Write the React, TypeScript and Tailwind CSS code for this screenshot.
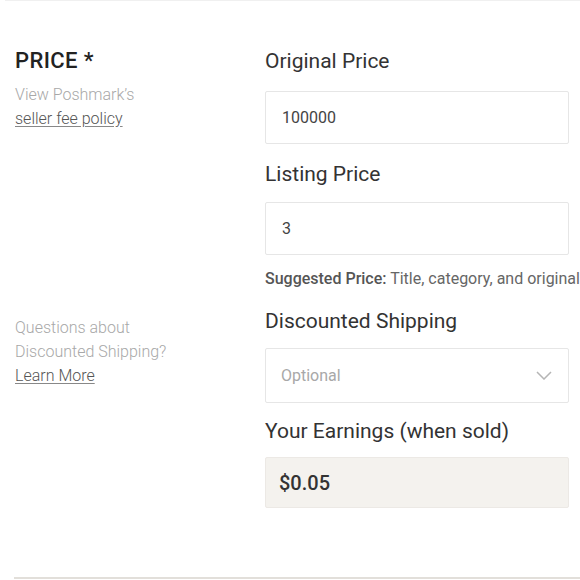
import React from "react";

const font = { fontFamily: "Roboto, 'Noto Sans', sans-serif" };

export default function App() {
  return (
    <div className="w-[580px] h-[580px] bg-white relative overflow-hidden" style={font}>
      <div className="ml-[5px] h-[1px] bg-[#f0f0f0]" />
      <div className="flex flex-col pt-[46px]">
        <div className="flex">
          <div className="w-[265px] pl-[15px] shrink-0">
            <div className="text-[22px] leading-[28px] font-medium text-[#222] tracking-[0.4px]">PRICE *</div>
            <div className="mt-[8px] text-[16px] leading-[24px] font-light text-[#a8a8a8]">View Poshmark’s</div>
            <div className="text-[16px] leading-[24px] font-light text-[#555] underline underline-offset-2 decoration-[#888]">seller fee policy</div>
          </div>
          <div className="flex flex-col w-[304px]">
            <div className="text-[21px] leading-[28px] text-[#333]">Original Price</div>
            <div className="mt-[16px] h-[53px] border border-[#e6e6e6] rounded-[2px] flex items-center pl-[16px] text-[16px] text-[#444]">100000</div>
            <div className="mt-[16px] text-[21px] leading-[28px] text-[#333]">Listing Price</div>
            <div className="mt-[14px] h-[53px] border border-[#e6e6e6] rounded-[2px] flex items-center pl-[16px] text-[16px] text-[#444]">3</div>
            <div className="mt-[14px] text-[16px] leading-[20px] text-[#666] whitespace-nowrap">
              <span className="font-medium text-[#555]">Suggested Price:</span> Title, category, and original price required
            </div>
          </div>
        </div>
        <div className="flex mt-[18px]">
          <div className="w-[265px] pl-[15px] shrink-0 pt-[9px]">
            <div className="text-[16px] leading-[24px] font-light text-[#a8a8a8]">Questions about</div>
            <div className="text-[16px] leading-[24px] font-light text-[#a8a8a8]">Discounted Shipping?</div>
            <div className="text-[16px] leading-[24px] font-light text-[#555] underline underline-offset-2 decoration-[#888]">Learn More</div>
          </div>
          <div className="flex flex-col w-[304px]">
            <div className="text-[21px] leading-[28px] text-[#333]">Discounted Shipping</div>
            <div className="mt-[13px] h-[55px] border border-[#e6e6e6] rounded-[2px] flex items-center justify-between pl-[15px] pr-[16px] text-[16px] text-[#a8a8a8]">
              <span>Optional</span>
              <svg width="16" height="9" viewBox="0 0 16 9" fill="none">
                <path d="M1 1 L8 8 L15 1" stroke="#b5b5b5" strokeWidth="1.5" />
              </svg>
            </div>
            <div className="mt-[14px] text-[21px] leading-[28px] text-[#333]">Your Earnings (when sold)</div>
            <div className="mt-[12px] h-[51px] bg-[#f4f2ee] border border-[#ece9e5] rounded-[2px] flex items-center pl-[13px] text-[20px] font-medium text-[#333]">$0.05</div>
          </div>
        </div>
      </div>
      <div className="absolute left-[14px] right-0 top-[577px] h-[2px] bg-[#e2dfda]" />
    </div>
  );
}
